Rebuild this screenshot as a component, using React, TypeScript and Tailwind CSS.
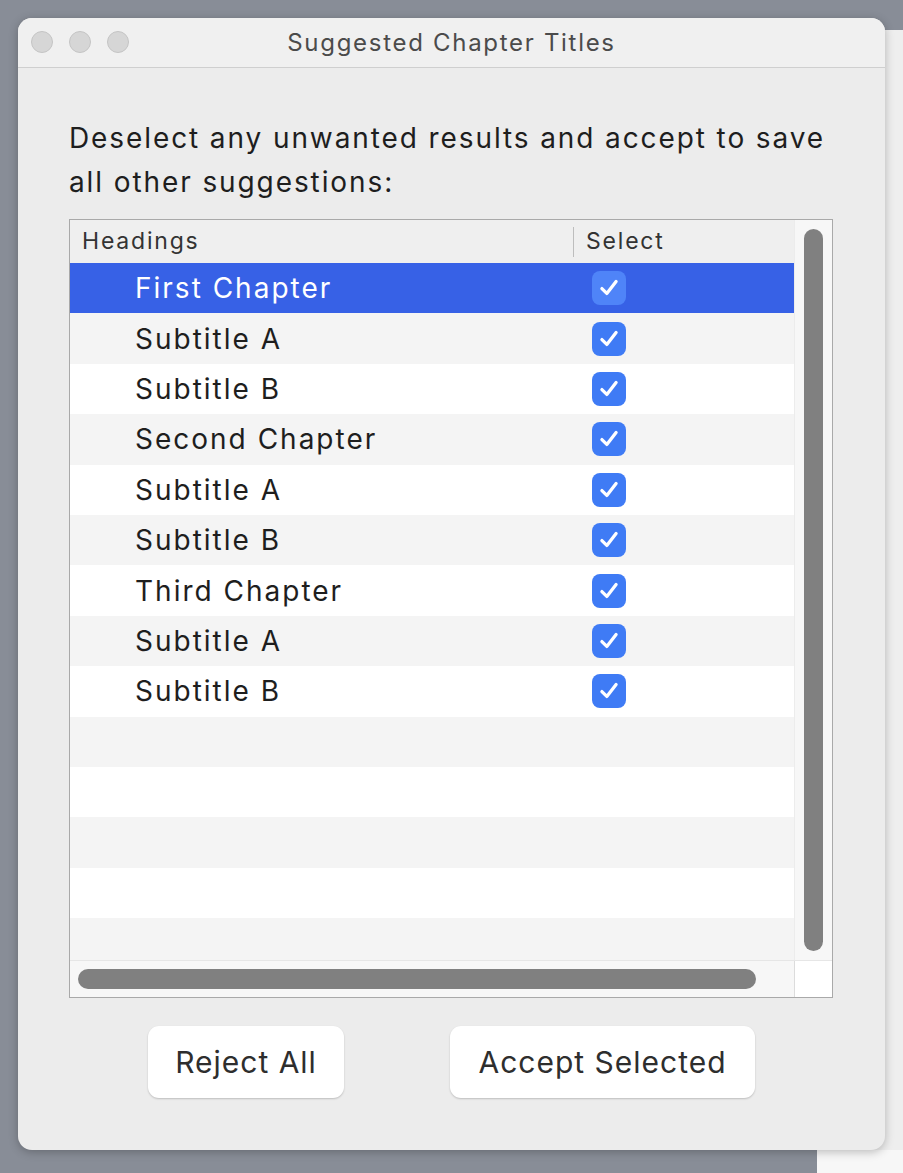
import React from 'react';

const rows = [
  'First Chapter',
  'Subtitle A',
  'Subtitle B',
  'Second Chapter',
  'Subtitle A',
  'Subtitle B',
  'Third Chapter',
  'Subtitle A',
  'Subtitle B',
];

const font = { fontFamily: 'Inter, "Noto Sans", "Liberation Sans", sans-serif' };

const Check: React.FC<{ active?: boolean }> = ({ active }) => (
  <div
    className={`w-[34px] h-[34px] rounded-[8px] flex items-center justify-center ${
      active ? 'bg-[#4f84f8]' : 'bg-[#3f7bf5]'
    }`}
  >
    <svg width="24" height="24" viewBox="0 0 22 22" fill="none">
      <path d="M4.5 11.5 L9 16 L17.5 5" stroke="white" strokeWidth="3" strokeLinecap="round" strokeLinejoin="round" />
    </svg>
  </div>
);

const App: React.FC = () => {
  const empty = 5;
  return (
    <div className="relative w-[903px] h-[1173px] bg-[#888d97] overflow-hidden" style={font}>
      {/* window behind */}
      <div className="absolute left-[817px] top-[30px] w-[120px] h-[1200px] bg-[#eeeeee]" />
      <div className="absolute left-[817px] top-[1150px] w-[120px] h-[40px] bg-[#f7f7f7]" />

      {/* dialog */}
      <div className="absolute left-[18px] top-[18px] w-[867px] h-[1132px] rounded-[14px] bg-[#ececec] shadow-[0_2px_10px_rgba(0,0,0,0.25)] overflow-hidden flex flex-col">
        {/* title bar */}
        <div className="relative h-[50px] shrink-0 bg-[#f0f0f0] border-b border-[#cfcfcf] flex items-center justify-center">
          <div className="absolute left-[13px] top-[13px] flex gap-[16px]">
            <div className="w-[22px] h-[22px] rounded-full bg-[#d6d6d6] border border-[#c4c4c4]" />
            <div className="w-[22px] h-[22px] rounded-full bg-[#d6d6d6] border border-[#c4c4c4]" />
            <div className="w-[22px] h-[22px] rounded-full bg-[#d6d6d6] border border-[#c4c4c4]" />
          </div>
          <span className="text-[24px] text-[#4b4b4b] tracking-[1.7px]">Suggested Chapter Titles</span>
        </div>

        <div className="flex flex-col px-[51px] pt-[48px]">
          <p className="text-[28px] leading-[44px] text-[#1e1e1e] tracking-[1.9px] whitespace-nowrap">
            Deselect any unwanted results and accept to save
            <br />
            all other suggestions:
          </p>

          {/* table */}
          <div className="mt-[15px] w-[764px] h-[779px] border border-[#a9a9a9] bg-white flex flex-col">
            <div className="flex flex-1 min-h-0">
              <div className="flex-1 flex flex-col overflow-hidden">
                {/* header */}
                <div className="h-[43px] shrink-0 bg-[#efefef] flex items-center text-[23px] text-[#333] tracking-[1.8px]">
                  <div className="w-[503px] pl-[12px]">Headings</div>
                  <div className="w-px h-[30px] bg-[#bdbdbd]" />
                  <div className="pl-[12px]">Select</div>
                </div>
                {rows.map((r, i) => (
                  <div
                    key={i}
                    className={`h-[50.4px] shrink-0 flex items-center ${
                      i === 0 ? 'bg-[#3761e6] text-white' : i % 2 === 1 ? 'bg-[#f4f4f4] text-[#1e1e1e]' : 'bg-white text-[#1e1e1e]'
                    }`}
                  >
                    <div className="w-[504px] pl-[65px] text-[28px] tracking-[2px] whitespace-nowrap">{r}</div>
                    <div className="pl-[18px]">
                      <Check active={i === 0} />
                    </div>
                  </div>
                ))}
                {Array.from({ length: empty }).map((_, i) => (
                  <div
                    key={'e' + i}
                    className={`h-[50.4px] shrink-0 ${i % 2 === 0 ? 'bg-[#f4f4f4]' : 'bg-white'}`}
                  />
                ))}
                <div className="flex-1 bg-[#f4f4f4]" />
              </div>
              {/* vertical scrollbar */}
              <div className="w-[38px] bg-[#f7f7f7] border-l border-[#ececec] flex justify-center pt-[9px] pb-[9px]">
                <div className="w-[19px] h-full rounded-full bg-[#808080]" />
              </div>
            </div>
            {/* horizontal scrollbar */}
            <div className="h-[37px] shrink-0 flex border-t border-[#e6e6e6]">
              <div className="flex-1 bg-[#f7f7f7] flex items-center pl-[8px] pr-[38px]">
                <div className="w-full h-[20px] rounded-full bg-[#808080]" />
              </div>
              <div className="w-[38px] bg-white border-l border-[#dcdcdc]" />
            </div>
          </div>

          {/* buttons */}
          <div className="mt-[28px] flex gap-[106px] pl-[79px]">
            <button className="w-[196px] h-[72px] rounded-[11px] bg-white shadow-[0_1px_2px_rgba(0,0,0,0.2)] text-[30px] tracking-[1px] text-[#2e2e2e]">
              Reject All
            </button>
            <button className="w-[305px] h-[72px] rounded-[11px] bg-white shadow-[0_1px_2px_rgba(0,0,0,0.2)] text-[30px] tracking-[1px] text-[#2e2e2e]">
              Accept Selected
            </button>
          </div>
        </div>
      </div>
    </div>
  );
};

export default App;
